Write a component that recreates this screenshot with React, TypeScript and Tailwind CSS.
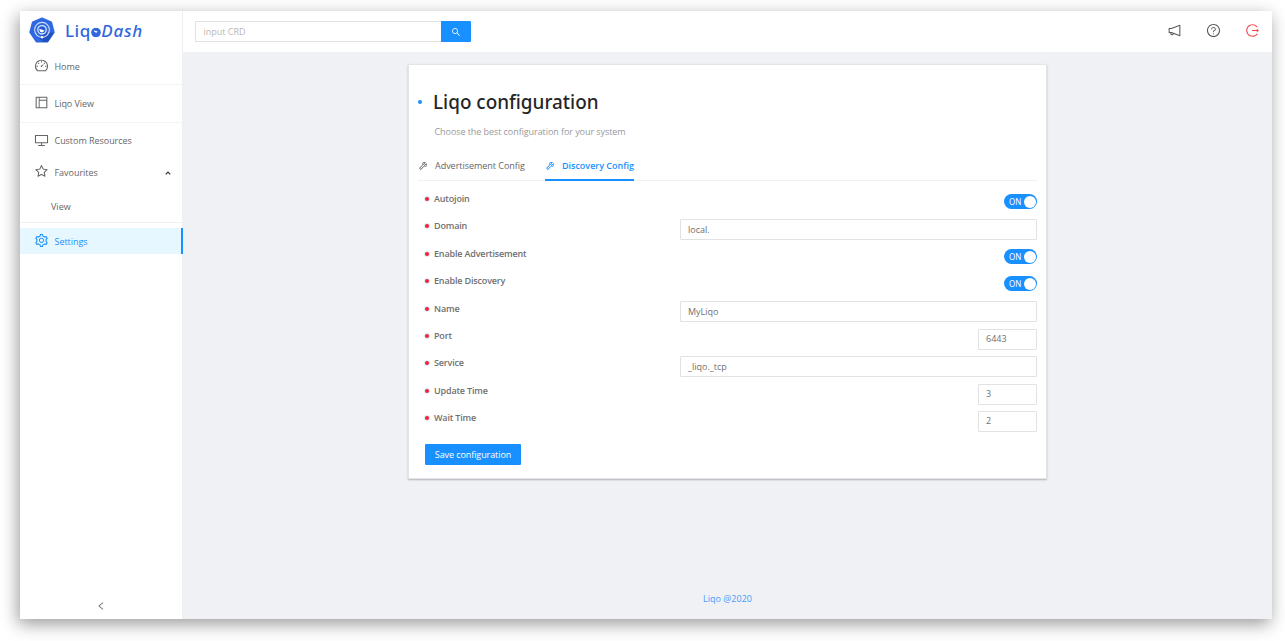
import React from "react";
import {
  AiOutlineDashboard,
  AiOutlineLayout,
  AiOutlineDesktop,
  AiOutlineStar,
  AiOutlineSetting,
  AiOutlineNotification,
  AiOutlineQuestionCircle,
  AiOutlineLogout,
  AiOutlineTool,
  AiOutlineSearch,
  AiOutlineLeft,
} from "react-icons/ai";

function Logo() {
  return (
    <svg viewBox="0 0 26 26" className="h-[26px] w-[26px] shrink-0">
      <path d="M13 1.200 22.300 5.200 24.900 15.200 18.600 24.600H7.400L1.100 15.200 3.700 5.200Z" fill="#2f68e0" stroke="#2f68e0" strokeWidth="1.600" strokeLinejoin="round" />
      <path d="M18 16 24.800 15.500 18.800 25H14L9 20Z" fill="#1f50bd" />
      <circle cx="13" cy="12.800" r="7.400" fill="none" stroke="#cfdcfb" strokeWidth="1.100" />
      <circle cx="13" cy="12.800" r="4.200" fill="#2459cf" stroke="#dbe6ff" strokeWidth="1.300" />
      <path d="M10.800 11.500q.8 1.600 2.200.8q.7 1.400 2.400.7a2.500 2.500 0 1 1-4.600-1.500Z" fill="#fff" />
      <circle cx="13" cy="20.200" r="1.200" fill="#fff" />
    </svg>
  );
}

function Wordmark() {
  return (
    <div className="ml-[10px] mt-[2px] flex items-baseline font-['Noto_Sans'] text-[17px] font-medium leading-[20px] text-[#2f68de]">
      <span className="tracking-[0.5px]">Liq</span>
      <svg viewBox="0 0 10 10" className="mr-[0.500px] h-[10px] w-[10px] translate-y-[0.500px]">
        <circle cx="5" cy="5" r="4.800" fill="#2f68de" />
        <path d="M3.200 2.600q.8 1.400 2 .7q.5 1 1.600.5a1.900 1.900 0 1 1-3.600-1.200Z" fill="#fff" />
      </svg>
      <span className="italic tracking-[0.8px]">Dash</span>
    </div>
  );
}

type NavItemProps = { icon: React.ReactNode; label: string; className: string; children?: React.ReactNode };

function NavItem({ icon, label, className, children }: NavItemProps) {
  return (
    <div className={`flex items-center pl-[14px] ${className}`}>
      <span className="mb-[2px] w-[20.500px] text-[15px]">{icon}</span>
      <span className="tracking-[-0.040px]">{label}</span>
      {children}
    </div>
  );
}

function Sidebar() {
  return (
    <aside className="flex w-[163px] shrink-0 flex-col border-r border-[#f0f0f0] bg-white text-[#666]">
      <div className="flex h-[38px] items-center pl-[9px]">
        <Logo />
        <Wordmark />
      </div>
      <NavItem icon={<AiOutlineDashboard />} label="Home" className="h-[36px] border-b border-[#f3f3f3]" />
      <NavItem icon={<AiOutlineLayout />} label="Liqo View" className="h-[38px] border-b border-[#f3f3f3]" />
      <NavItem icon={<AiOutlineDesktop />} label="Custom Resources" className="mt-[5px] h-[26px]" />
      <NavItem icon={<AiOutlineStar />} label="Favourites" className="mt-[5px] h-[27px] pr-[11px]">
        <svg viewBox="0 0 6 4" className="ml-auto h-[4px] w-[6px]">
          <path d="M.7 3.400 3 1.100 5.300 3.400" fill="none" stroke="#333" strokeWidth="1.200" />
        </svg>
      </NavItem>
      <div className="flex h-[37px] items-center border-b border-[#f0f0f0] pl-[31px] pt-[5px]">View</div>
      <div className="-mr-px mt-[5px] flex h-[26px] items-center border-r-2 border-[#1890ff] bg-[#e6f7ff] pl-[14px] pt-px text-[#1890ff]">
        <span className="mb-[3px] w-[20.500px] text-[15px]">
          <AiOutlineSetting />
        </span>
        <span className="tracking-[-0.040px]">Settings</span>
      </div>
      <div className="mt-auto flex h-[27px] items-center justify-center text-[10px]">
        <AiOutlineLeft />
      </div>
    </aside>
  );
}

function TopBar() {
  return (
    <header className="flex h-[41px] shrink-0 items-center bg-white pl-[12px] pr-[12px]">
      <div className="flex h-[21px] w-[276px]">
        <div className="flex flex-1 items-center rounded-l-[1px] border border-r-0 border-[#e2e2e2] pl-[7.500px] text-[#b8b8b8]">input CRD</div>
        <div className="flex w-[30px] items-center justify-center rounded-r-[1px] bg-[#1890ff] text-[10px] text-white">
          <AiOutlineSearch />
        </div>
      </div>
      <div className="mb-[3px] ml-auto flex items-center gap-[24px] text-[15px] text-[#595959]">
        <AiOutlineNotification />
        <AiOutlineQuestionCircle />
        <AiOutlineLogout className="text-[#f04a4d]" />
      </div>
    </header>
  );
}

function Switch() {
  return (
    <div className="flex h-[15px] w-[33px] items-center justify-between rounded-full bg-[#1890ff] pl-[5px] pr-[1px] pt-px pb-px font-['Noto_Sans'] text-[8px] text-white">
      <span>ON</span>
      <span className="h-[12px] w-[12px] rounded-full bg-white" />
    </div>
  );
}

type Field = { label: string; kind: "switch" | "text" | "number"; value?: string };

const fields: Field[] = [
  { label: "Autojoin", kind: "switch" },
  { label: "Domain", kind: "text", value: "local." },
  { label: "Enable Advertisement", kind: "switch" },
  { label: "Enable Discovery", kind: "switch" },
  { label: "Name", kind: "text", value: "MyLiqo" },
  { label: "Port", kind: "number", value: "6443" },
  { label: "Service", kind: "text", value: "_liqo._tcp" },
  { label: "Update Time", kind: "number", value: "3" },
  { label: "Wait Time", kind: "number", value: "2" },
];

function FieldRow({ label, kind, value }: Field) {
  return (
    <div className="flex h-[27.400px] items-start justify-between">
      <div className="flex h-[14.500px] items-center">
        <span className="mr-[5px] h-[4px] w-[4px] rounded-full bg-[#f5222d] ring-1 ring-[#d9ecff]" />
        <span className="font-semibold tracking-[-0.160px] text-[#707070]">{label}</span>
      </div>
      {kind === "switch" && (
        <div className="pt-[2.500px]">
          <Switch />
        </div>
      )}
      {kind === "text" && (
        <div className="flex h-[21px] w-[357px] items-center rounded-[1px] border border-[#e2e2e2] pl-[7px] text-[#707070]">{value}</div>
      )}
      {kind === "number" && (
        <div className="flex h-[21px] w-[59px] items-center rounded-[1px] border border-[#e2e2e2] pl-[7px] text-[#707070]">{value}</div>
      )}
    </div>
  );
}

function ConfigCard() {
  return (
    <section className="flex h-[414.500px] w-[639px] flex-col rounded-[1px] border border-[#e3e4e8] bg-white px-[9px] shadow-[0_1px_2px_rgba(0,0,0,0.25)]">
      <div className="mt-[23px] flex h-[28px] items-center">
        <span className="mr-[11px] h-[4px] w-[4px] rounded-full bg-[#1890ff]" />
        <h1 className="font-['Noto_Sans'] text-[18.900px] font-medium text-[#262626]">Liqo configuration</h1>
      </div>
      <p className="mt-[8.500px] h-[14px] pl-[16.500px] leading-[14px] tracking-[-0.070px] text-[#999]">Choose the best configuration for your system</p>
      <div className="mt-[13.300px] flex h-[29px] border-b border-[#f0f0f0] text-[#666]">
        <div className="flex h-[29px] items-center">
          <AiOutlineTool className="mr-[7px] text-[10px]" />
          <span className="tracking-[-0.030px]">Advertisement Config</span>
        </div>
        <div className="ml-[20px] flex h-[29px] w-[89px] items-center border-b-2 border-[#1890ff] pt-[2px] font-semibold text-[#1890ff]">
          <AiOutlineTool className="mr-[7px] shrink-0 text-[10px]" />
          <span className="whitespace-nowrap">Discovery Config</span>
        </div>
      </div>
      <div className="mt-[11px] pl-[7px]">
        {fields.map((field) => (
          <FieldRow key={field.label} {...field} />
        ))}
        <button className="mt-[6px] flex h-[21px] w-[96px] items-center justify-center rounded-[1px] bg-[#1890ff] tracking-[-0.080px] text-white">
          Save configuration
        </button>
      </div>
    </section>
  );
}

export default function App() {
  return (
    <div className="h-[641px] w-[1285px] overflow-hidden bg-white pl-[20px] pt-[11px] font-['Open_Sans','Noto_Sans',sans-serif] text-[9px] leading-[14px]">
      <div className="flex h-[608px] w-[1252px] bg-[#eff1f5] shadow-[-2px_5px_16px_rgba(0,0,0,0.4)]">
        <Sidebar />
        <main className="flex min-w-0 flex-1 flex-col">
          <TopBar />
          <div className="flex flex-1 flex-col items-center pt-[12px]">
            <ConfigCard />
            <footer className="mt-auto mb-[13px] text-[#4a98f8]">Liqo @2020</footer>
          </div>
        </main>
      </div>
    </div>
  );
}
